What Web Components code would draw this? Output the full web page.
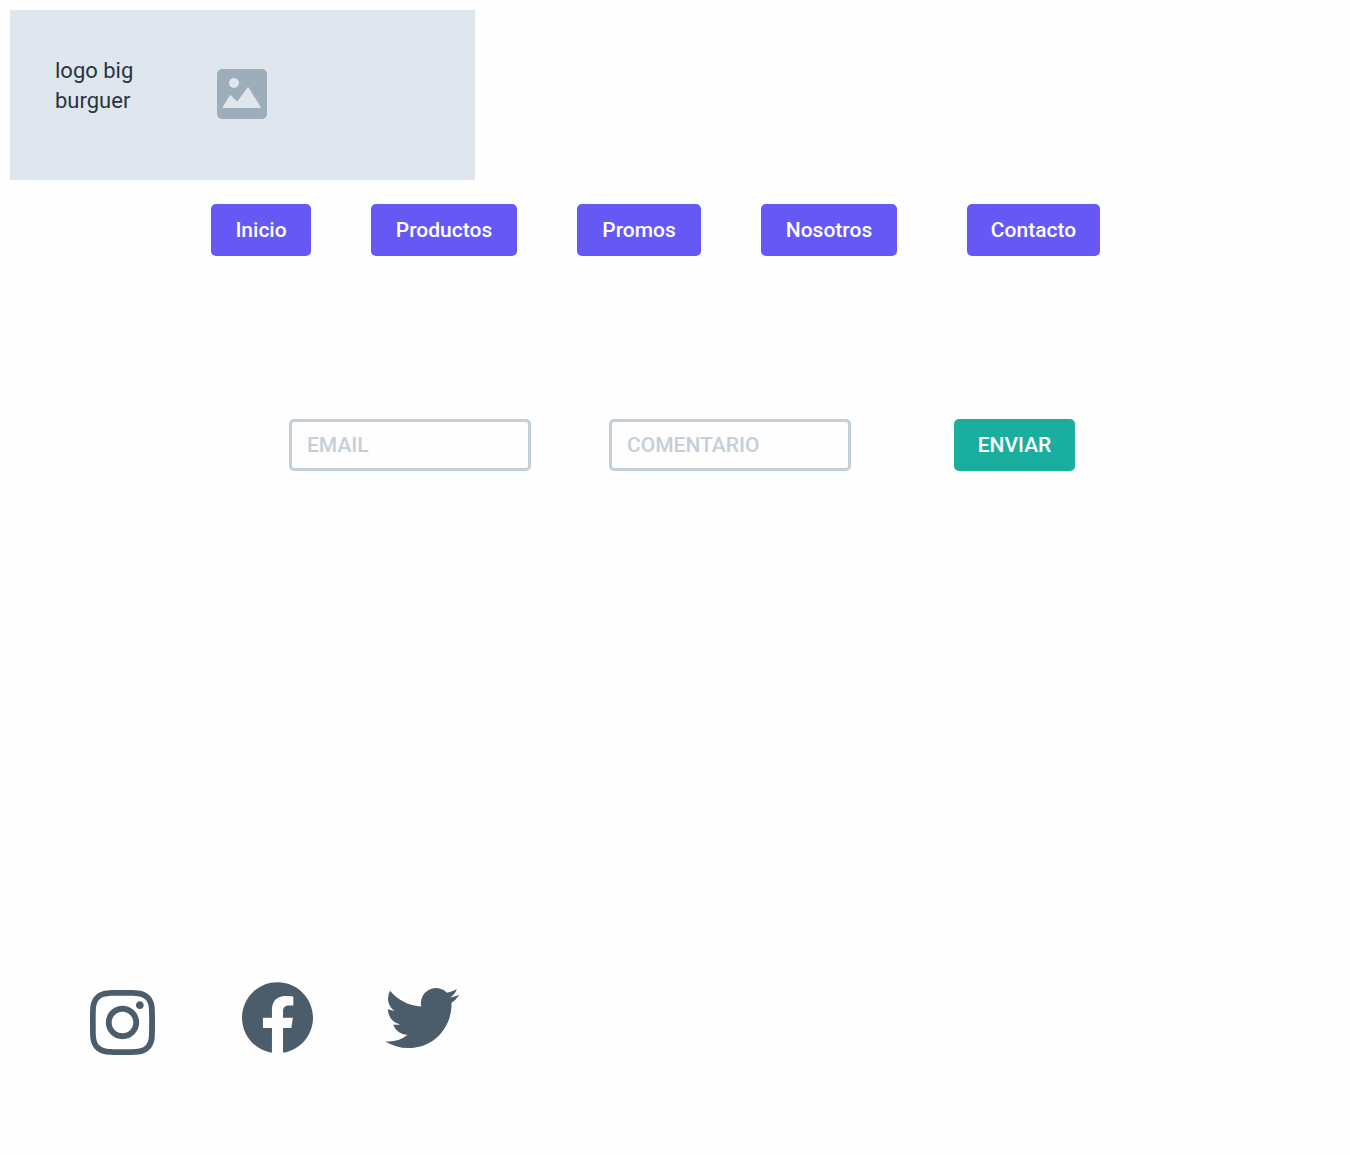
<!DOCTYPE html>
<html lang="es">
<head>
<meta charset="utf-8">
<meta name="viewport" content="width=device-width, initial-scale=1">
<title>Big Burguer</title>
<style>
  body { margin: 0; background: #fefefe; color: #273444; font: 22px/30px Roboto, "Liberation Sans", sans-serif; }
</style>
</head>
<body>
<burger-page>
  <brand-banner slot="banner">logo big burguer</brand-banner>
  <site-nav slot="nav">
    <nav-button>Inicio</nav-button>
    <nav-button>Productos</nav-button>
    <nav-button>Promos</nav-button>
    <nav-button>Nosotros</nav-button>
    <nav-button>Contacto</nav-button>
  </site-nav>
  <contact-form></contact-form>
  <social-links slot="footer"></social-links>
</burger-page>

<script>
const define = (name, html) => {
  const template = document.createElement('template');
  template.innerHTML = html;
  customElements.define(name, class extends HTMLElement {
    constructor() {
      super();
      this.attachShadow({ mode: 'open' }).append(template.content.cloneNode(true));
    }
  });
};

define('burger-page', `
  <style>
    :host { display: flex; flex-direction: column; min-height: 100vh; box-sizing: border-box; padding: 10px 10px 100px; }
    header { display: flex; flex-direction: column; gap: 24px; }
    main { flex: 1; padding-top: 163px; }
  </style>
  <header><slot name="banner"></slot><slot name="nav"></slot></header>
  <main><slot></slot></main>
  <footer><slot name="footer"></slot></footer>
`);

define('brand-banner', `
  <style>
    :host { display: flex; align-items: flex-start; gap: 62px; box-sizing: border-box; width: 465px; max-width: 100%; min-height: 170px; padding: 46px 45px; background: #dfe6ed; }
    .name { width: 100px; }
    svg { width: 50px; height: 50px; margin-top: 13px; flex: none; }
  </style>
  <span class="name"><slot></slot></span>
  <svg viewBox="0 0 50 50" aria-hidden="true">
    <rect width="50" height="50" rx="5" fill="#9eadba"/>
    <circle cx="17" cy="14" r="5" fill="#dfe6ed"/>
    <path d="M6 38.5 13.3 26.3 20.3 33.2 31 18.5 43.6 38.5Z" fill="#dfe6ed" stroke="#dfe6ed" stroke-width="1" stroke-linejoin="round"/>
  </svg>
`);

define('site-nav', `
  <style>
    :host { display: block; padding-left: 201px; }
    nav { display: grid; grid-template-columns: 100px 146px 124px 136px 143px; column-gap: 60px; }
    ::slotted(:last-child) { padding-left: 10px; }
  </style>
  <nav><slot></slot></nav>
`);

define('nav-button', `
  <style>
    :host { display: block; }
    button { display: block; width: 100%; height: 52px; padding: 0; border: 0; border-radius: 5px; background: #6558f5; color: #fff; font: 500 21px/30px Roboto, "Liberation Sans", sans-serif; cursor: pointer; }
  </style>
  <button type="button"><slot></slot></button>
`);

define('contact-form', `
  <style>
    :host { display: block; padding-left: 279px; }
    form { display: flex; align-items: center; gap: 78px; }
    input, button { box-sizing: border-box; height: 52px; margin: 0; border-radius: 5px; font: 500 21px/30px Roboto, "Liberation Sans", sans-serif; }
    input { width: 242px; padding: 0 15px; border: 3px solid #c3cfd9; background: #fefefe; color: #273444; }
    input::placeholder { color: #c3cfd9; opacity: 1; }
    .action { padding-left: 25px; }
    button { width: 121px; padding: 0; border: 0; background: #1aae9f; color: #fff; cursor: pointer; }
  </style>
  <form>
    <input type="email" name="email" placeholder="EMAIL" aria-label="Email">
    <input type="text" name="comentario" placeholder="COMENTARIO" aria-label="Comentario">
    <div class="action"><button type="submit">ENVIAR</button></div>
  </form>
`);

define('social-links', `
  <style>
    :host { display: flex; align-items: center; padding-left: 80px; color: #4b5c6b; }
    a { display: block; color: inherit; }
    svg { display: block; fill: currentColor; }
    .instagram { padding-top: 10px; margin-right: 87px; }
    .instagram svg { width: 65px; height: 65px; }
    .facebook { margin-right: 72px; }
    .facebook svg { width: 71px; height: 71px; }
    .twitter svg { width: 74px; height: 74px; }
  </style>
  <a class="instagram" href="#instagram" aria-label="Instagram"><svg viewBox="0 0 24 24"><path d="M12 0C8.74 0 8.333.015 7.053.072 5.775.132 4.905.333 4.14.63c-.789.306-1.459.717-2.126 1.384S.935 3.35.63 4.14C.333 4.905.131 5.775.072 7.053.012 8.333 0 8.74 0 12s.015 3.667.072 4.947c.06 1.277.261 2.148.558 2.913.306.788.717 1.459 1.384 2.126.667.666 1.336 1.079 2.126 1.384.766.296 1.636.499 2.913.558C8.333 23.988 8.74 24 12 24s3.667-.015 4.947-.072c1.277-.06 2.148-.262 2.913-.558.788-.306 1.459-.718 2.126-1.384.666-.667 1.079-1.335 1.384-2.126.296-.765.499-1.636.558-2.913.06-1.28.072-1.687.072-4.947s-.015-3.667-.072-4.947c-.06-1.277-.262-2.149-.558-2.913-.306-.789-.718-1.459-1.384-2.126C21.319 1.347 20.651.935 19.86.63c-.765-.297-1.636-.499-2.913-.558C15.667.012 15.26 0 12 0zm0 2.16c3.203 0 3.585.016 4.85.071 1.17.055 1.805.249 2.227.415.562.217.96.477 1.382.896.419.42.679.819.896 1.381.164.422.36 1.057.413 2.227.057 1.266.07 1.646.07 4.85s-.015 3.585-.074 4.85c-.061 1.17-.256 1.805-.421 2.227-.224.562-.479.96-.899 1.382-.419.419-.824.679-1.38.896-.42.164-1.065.36-2.235.413-1.274.057-1.649.07-4.859.07-3.211 0-3.586-.015-4.859-.074-1.171-.061-1.816-.256-2.236-.421-.569-.224-.96-.479-1.379-.899-.421-.419-.69-.824-.9-1.38-.165-.42-.359-1.065-.42-2.235-.045-1.26-.061-1.649-.061-4.844 0-3.196.016-3.586.061-4.861.061-1.17.255-1.814.42-2.234.21-.57.479-.96.9-1.381.419-.419.81-.689 1.379-.898.42-.166 1.051-.361 2.221-.421 1.275-.045 1.65-.06 4.859-.06l.045.03zm0 3.678c-3.405 0-6.162 2.76-6.162 6.162 0 3.405 2.76 6.162 6.162 6.162 3.405 0 6.162-2.76 6.162-6.162 0-3.405-2.76-6.162-6.162-6.162zM12 16c-2.21 0-4-1.79-4-4s1.79-4 4-4 4 1.79 4 4-1.79 4-4 4zm7.846-10.405c0 .795-.646 1.44-1.44 1.44-.795 0-1.44-.646-1.44-1.44 0-.794.646-1.439 1.44-1.439.793-.001 1.44.645 1.44 1.439z"/></svg></a>
  <a class="facebook" href="#facebook" aria-label="Facebook"><svg viewBox="0 0 24 24"><path d="M24 12.073c0-6.627-5.373-12-12-12s-12 5.373-12 12c0 5.99 4.388 10.954 10.125 11.854v-8.385H7.078v-3.47h3.047V9.43c0-3.007 1.792-4.669 4.533-4.669 1.312 0 2.686.235 2.686.235v2.953H15.83c-1.491 0-1.956.925-1.956 1.874v2.25h3.328l-.532 3.47h-2.796v8.385C19.612 23.027 24 18.062 24 12.073z"/></svg></a>
  <a class="twitter" href="#twitter" aria-label="Twitter"><svg viewBox="0 0 24 24"><path d="M23.953 4.57a10 10 0 01-2.825.775 4.958 4.958 0 002.163-2.723c-.951.555-2.005.959-3.127 1.184a4.92 4.92 0 00-8.384 4.482C7.69 8.095 4.067 6.13 1.64 3.162a4.822 4.822 0 00-.666 2.475c0 1.71.87 3.213 2.188 4.096a4.904 4.904 0 01-2.228-.616v.06a4.923 4.923 0 003.946 4.827 4.996 4.996 0 01-2.212.085 4.936 4.936 0 004.604 3.417 9.867 9.867 0 01-6.102 2.105c-.39 0-.779-.023-1.17-.067a13.995 13.995 0 007.557 2.209c9.053 0 13.998-7.496 13.998-13.985 0-.21 0-.42-.015-.63A9.935 9.935 0 0024 4.59z"/></svg></a>
`);
</script>
</body>
</html>
